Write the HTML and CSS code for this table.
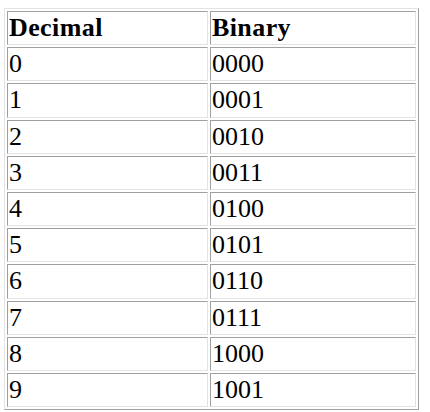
FILE: index.html
```html
<!DOCTYPE html>
<html>
<head>
<meta charset="utf-8">
<link rel="stylesheet" href="styles.css">
</head>
<body>
<table class="bin">
<tr><th class="c1">Decimal</th><th class="c2">Binary</th></tr>
<tr><td>0</td><td>0000</td></tr>
<tr><td>1</td><td>0001</td></tr>
<tr><td>2</td><td>0010</td></tr>
<tr><td>3</td><td>0011</td></tr>
<tr><td>4</td><td>0100</td></tr>
<tr><td>5</td><td>0101</td></tr>
<tr><td>6</td><td>0110</td></tr>
<tr><td>7</td><td>0111</td></tr>
<tr><td>8</td><td>1000</td></tr>
<tr><td>9</td><td>1001</td></tr>
</table>
</body>
</html>
```
FILE: styles.css
```css
html, body {
  margin: 0;
  padding: 0;
  background: #ffffff;
}
body {
  font-family: "Liberation Serif", "Times New Roman", serif;
  color: #000;
}
.bin {
  margin: 8px 0 0 4px;
  width: 415px;
  border-collapse: separate;
  border-spacing: 2px;
  border-style: solid;
  border-width: 1px;
  border-color: #e3e3e3 #a0a0a0 #a0a0a0 #e3e3e3;
  table-layout: fixed;
}
.bin th, .bin td {
  padding: 1px;
  font-size: 26px;
  line-height: 30.2px;
  text-align: left;
  vertical-align: middle;
  border-style: solid;
  border-width: 1px;
  border-color: #a0a0a0 #e3e3e3 #e3e3e3 #a0a0a0;
}
.bin .c1 {
  width: 197px;
}
.bin .c2 {
  width: 202px;
}
.bin th {
  font-weight: bold;
  letter-spacing: 0.4px;
}
```
